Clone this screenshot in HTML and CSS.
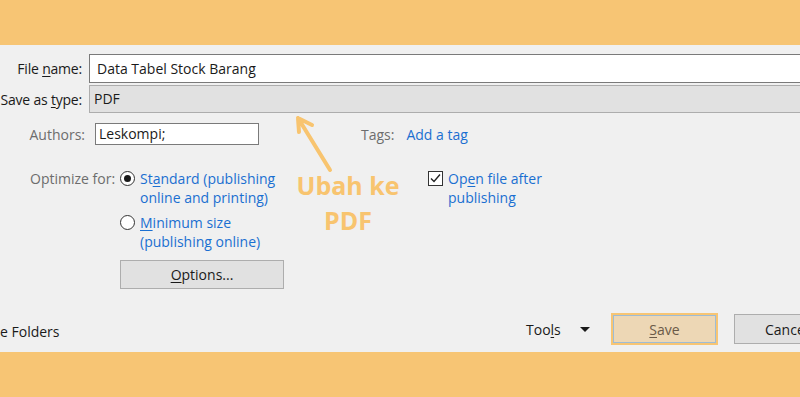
FILE: index.html
```html
<!DOCTYPE html>
<html>
  <head>
    <title>Publish as PDF</title>
    <link rel="stylesheet" href="styles.css">
  </head>
  <body>
    <div class="band"></div>
    <div class="dialog">
      <div class="field-row">
        <label class="field-label">File <u>n</u>ame:</label>
        <div class="field-input">Data Tabel Stock Barang</div>
      </div>
      <div class="field-row tight">
        <label class="field-label">Save as <u>t</u>ype:</label>
        <div class="field-select">PDF</div>
      </div>

      <div class="meta-row">
        <span class="meta-label">Authors:</span>
        <div class="meta-input">Leskompi;</div>
        <span class="meta-label tags">Tags:</span>
        <a class="link">Add a tag</a>
      </div>

      <div class="opt-row">
        <span class="meta-label opt-label">Optimize for:</span>
        <div class="opt-choices">
          <div class="choice">
            <span class="radio checked"></span>
            <span class="link">St<u>a</u>ndard (publishing<br>online and printing)</span>
          </div>
          <div class="choice">
            <span class="radio"></span>
            <span class="link"><u>M</u>inimum size<br>(publishing online)</span>
          </div>
          <button class="btn options"><u>O</u>ptions...</button>
        </div>
        <div class="choice open-after">
          <span class="checkbox">
            <svg width="13" height="13" viewBox="0 0 13 13"><path d="M2 6.5 L5 9.5 L11 2.5" fill="none" stroke="#222" stroke-width="1.4"/></svg>
          </span>
          <span class="link">Op<u>e</u>n file after<br>publishing</span>
        </div>
      </div>

      <div class="footer">
        <span class="folders">e Folders</span>
        <span class="tools">Too<u>l</u>s</span>
        <span class="caret"></span>
        <button class="btn save"><u>S</u>ave</button>
        <button class="btn cancel">Cancel</button>
      </div>

      <!-- annotation drawn over the dialog -->
      <svg class="arrow" width="60" height="70" viewBox="0 0 60 70">
        <path d="M50 62 L18 10 M18 10 L32 17 M18 10 L19 24" fill="none" stroke="#f8c46f" stroke-width="4" stroke-linecap="round" stroke-linejoin="round"/>
      </svg>
      <div class="note">Ubah ke<br>PDF</div>
    </div>
    <div class="band"></div>
  </body>
</html>
```

FILE: styles.css
```css
body {
  margin: 0;
  padding: 0;
  background-color: #f7c574;
  font-family: "Open Sans", "Noto Sans", sans-serif;
  font-size: 14px;
  color: #1a1a1a;
  overflow: hidden;
}

.band {
  height: 45px;
  background-color: #f7c574;
}

.dialog {
  position: relative;
  height: 307px;
  background-color: #f0f0f0;
  overflow: hidden;
  padding-top: 9px;
  box-sizing: border-box;
}

u {
  text-decoration: underline;
  text-underline-offset: 2px;
}

.field-row {
  display: flex;
  align-items: center;
  margin-right: -20px;
}

.field-row.tight {
  margin-top: 2px;
}

.field-label {
  width: 89px;
  text-align: right;
  padding-right: 7px;
  box-sizing: border-box;
  flex-shrink: 0;
  white-space: nowrap;
  letter-spacing: -0.2px;
}

.field-input {
  flex: 1;
  height: 29px;
  line-height: 27px;
  box-sizing: border-box;
  background-color: #fff;
  border: 1px solid #7a7a7a;
  padding-left: 7px;
}

.field-select {
  flex: 1;
  height: 28px;
  line-height: 26px;
  box-sizing: border-box;
  background-color: #e1e1e1;
  border: 1px solid #adadad;
  padding-left: 4px;
}

.meta-row {
  display: flex;
  align-items: center;
  margin-top: 10px;
  height: 22px;
}

.meta-label {
  color: #6d6d6d;
}

.meta-row .meta-label:first-child {
  width: 95px;
  text-align: right;
  padding-right: 10px;
  box-sizing: border-box;
}

.meta-input {
  width: 164px;
  height: 22px;
  line-height: 20px;
  box-sizing: border-box;
  background-color: #fff;
  border: 1px solid #7a7a7a;
  padding-left: 3px;
}

.tags {
  margin-left: 102px;
  margin-right: 12px;
}

.link {
  color: #1a6fd1;
}

.opt-row {
  display: flex;
  align-items: flex-start;
  margin-top: 24px;
  line-height: 19px;
}

.opt-label {
  width: 120px;
  padding-left: 30px;
  box-sizing: border-box;
  white-space: nowrap;
}

.opt-choices {
  display: flex;
  flex-direction: column;
  gap: 6px;
  width: 308px;
}

.choice {
  display: flex;
  align-items: flex-start;
  gap: 5px;
}

.radio {
  width: 15px;
  height: 15px;
  margin-top: 2px;
  box-sizing: border-box;
  border: 1px solid #333;
  border-radius: 50%;
  background-color: #fff;
  display: flex;
  align-items: center;
  justify-content: center;
}

.radio.checked::after {
  content: "";
  width: 7px;
  height: 7px;
  border-radius: 50%;
  background-color: #1a1a1a;
}

.checkbox {
  width: 15px;
  height: 15px;
  margin-top: 2px;
  box-sizing: border-box;
  border: 1px solid #333;
  background-color: #fff;
  display: flex;
  align-items: center;
  justify-content: center;
}

.btn {
  font-family: inherit;
  font-size: 14px;
  color: #1a1a1a;
  background-color: #e1e1e1;
  border: 1px solid #adadad;
  padding: 0;
  cursor: pointer;
}

.options {
  width: 164px;
  height: 29px;
  margin-top: 3px;
}

.footer {
  display: flex;
  align-items: center;
  margin-top: 24px;
  height: 32px;
}

.folders {
  width: 526px;
  flex-shrink: 0;
  padding-top: 4px;
  white-space: nowrap;
}

.tools {
  width: 54px;
  flex-shrink: 0;
}

.caret {
  flex-shrink: 0;
  width: 0;
  height: 0;
  border-left: 5px solid transparent;
  border-right: 5px solid transparent;
  border-top: 5px solid #1a1a1a;
  margin-right: 21px;
}

.save {
  flex-shrink: 0;
  width: 107px;
  height: 32px;
  background-color: #edd7b5;
  border: 2px solid #f7c574;
  box-shadow: inset 0 0 0 1px #9dbcd6;
  color: #6a5a48;
}

.cancel {
  flex-shrink: 0;
  width: 80px;
  height: 30px;
  margin-left: 16px;
  text-align: left;
  padding-left: 30px;
  white-space: nowrap;
  overflow: hidden;
}

.arrow {
  position: absolute;
  left: 280px;
  top: 63px;
}

.note {
  position: absolute;
  left: 288px;
  top: 123px;
  width: 120px;
  text-align: center;
  font-weight: bold;
  font-size: 25px;
  line-height: 35px;
  color: #f8c46f;
}
```
